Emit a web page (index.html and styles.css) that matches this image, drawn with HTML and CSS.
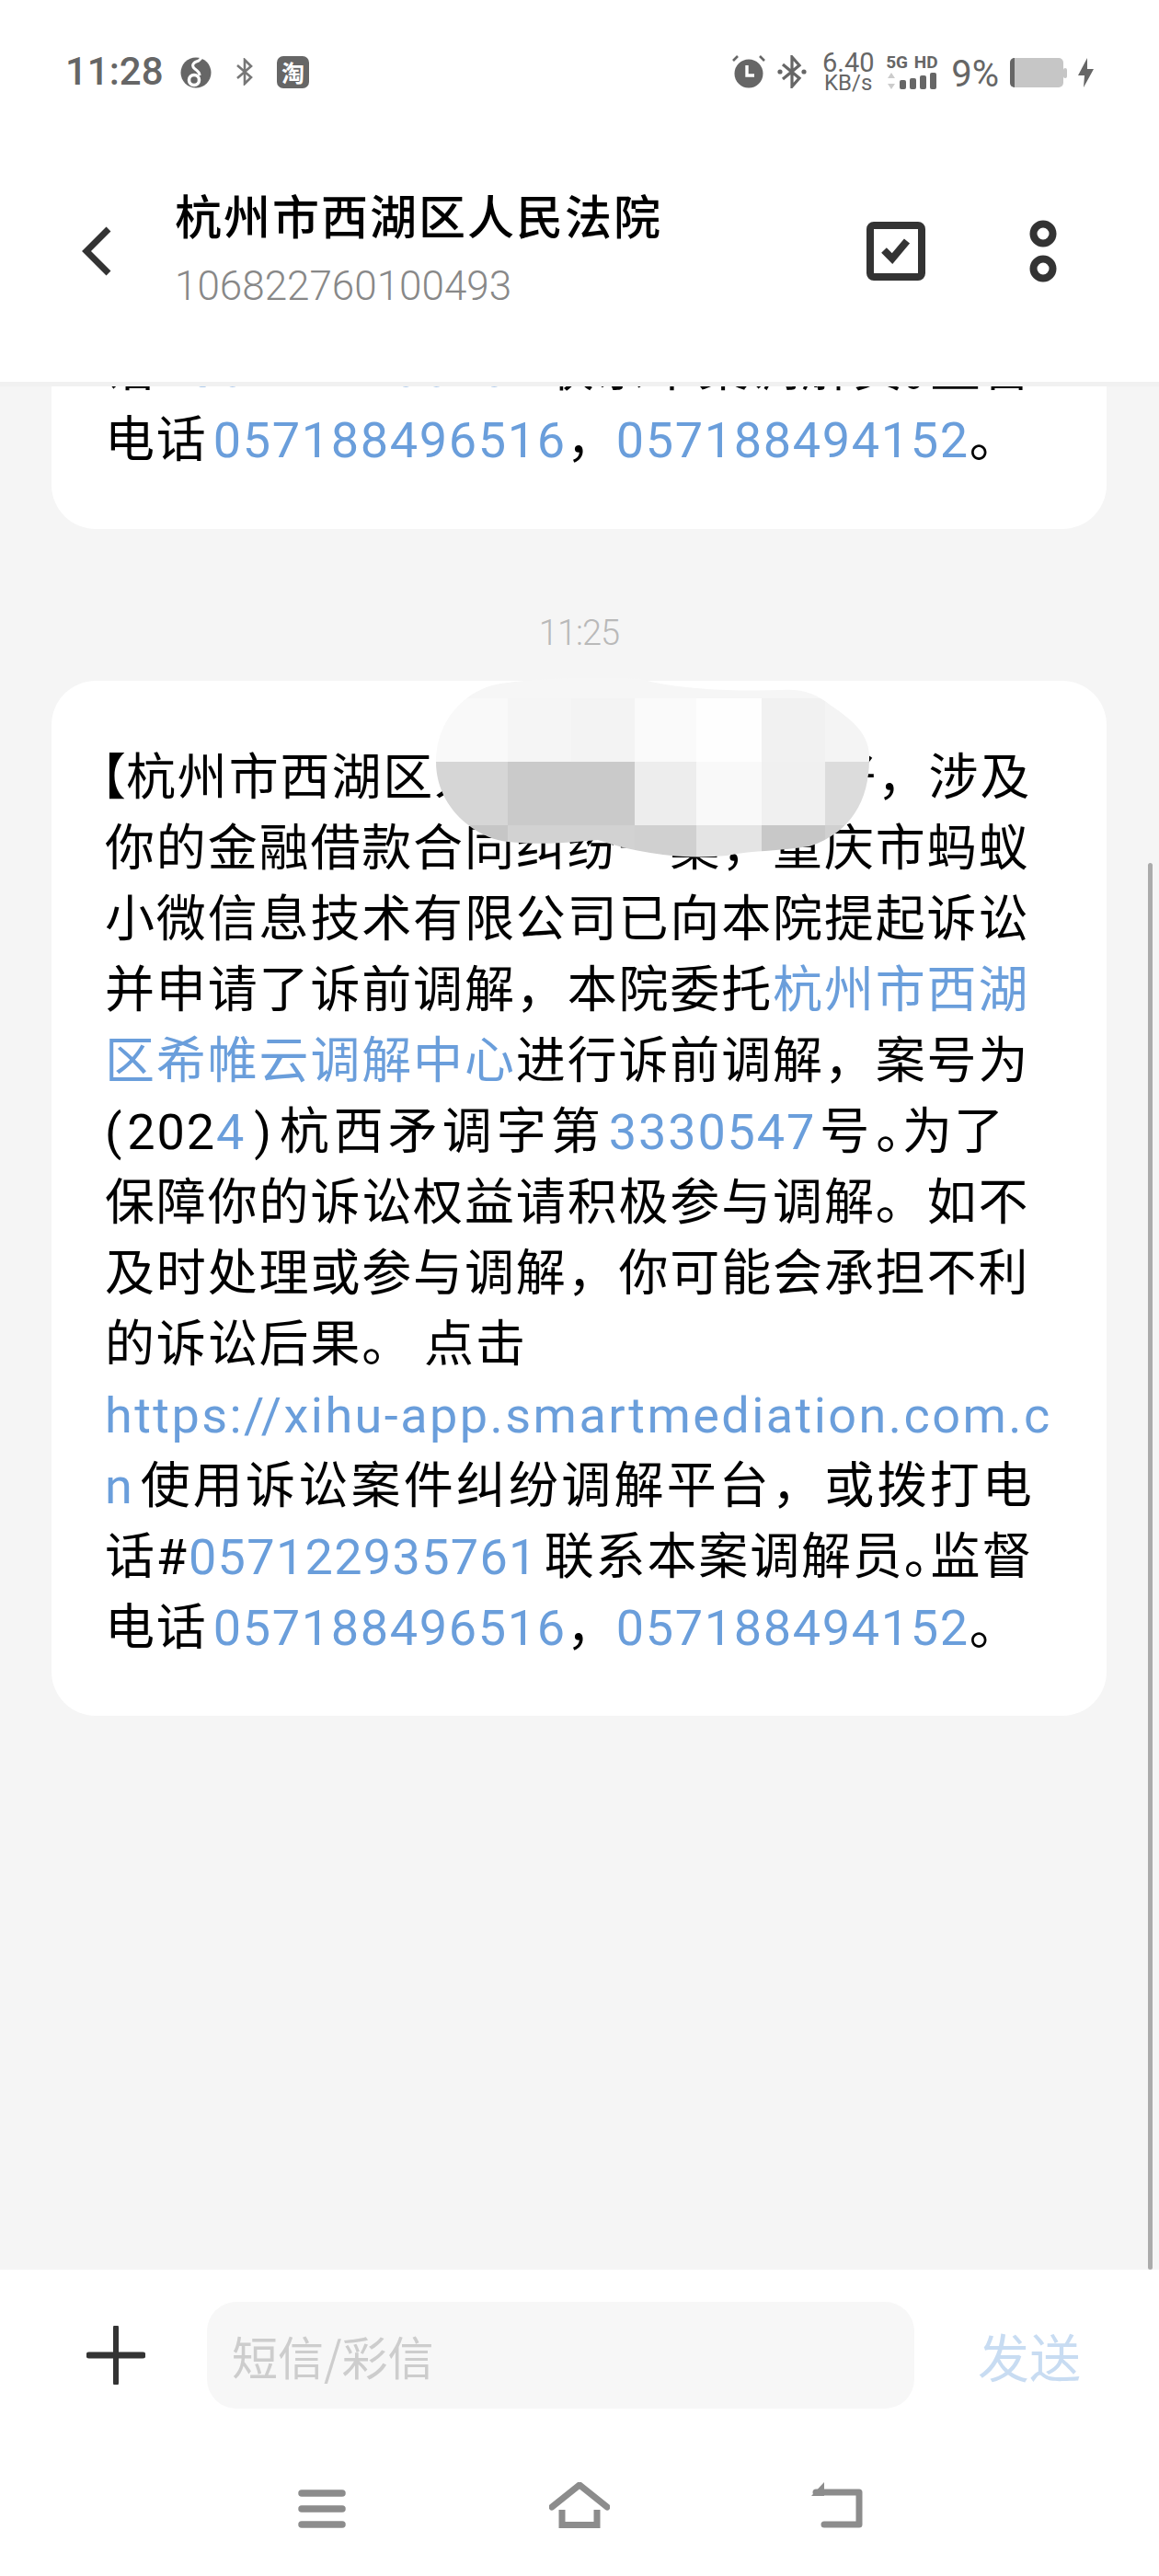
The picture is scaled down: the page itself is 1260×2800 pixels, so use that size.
FILE: index.html
```html
<!DOCTYPE html>
<html lang="zh-CN">
<head>
<meta charset="utf-8">
<title>短信</title>
<link rel="stylesheet" href="styles.css">
</head>
<body>
<div class="phone">
  <header class="top">
    <div class="status">
      <div class="status-left">
        <span class="clock">11:28</span>
        <svg class="ic-music" width="34" height="36" viewBox="0 0 34 36"><circle cx="17" cy="19" r="16.5" fill="#666"/><path d="M25 1 L20 6 C13 8 12 12 16 15 C19 17 21 19 21 22" fill="none" stroke="#fff" stroke-width="3"/><circle cx="15" cy="27" r="5.5" fill="none" stroke="#fff" stroke-width="3.5"/></svg>
        <svg class="ic-bt-small" width="20" height="30" viewBox="0 0 20 30"><path d="M2 8 L17 21 L10 28 V2 L17 9 L2 22" fill="none" stroke="#777" stroke-width="2.6"/></svg>
        <span class="tao">淘</span>
      </div>
      <div class="status-right">
        <svg class="ic-alarm" width="36" height="36" viewBox="0 0 36 36"><path d="M1 6 L6 1 M35 6 L30 1" stroke="#666" stroke-width="2.6"/><circle cx="18" cy="20" r="15.5" fill="#666"/><path d="M16 11 V22 H24" fill="none" stroke="#fff" stroke-width="3.4"/></svg>
        <svg class="ic-bt" width="32" height="36" viewBox="0 0 32 36"><path d="M6 10 L24 25 L16 34 V2 L24 11 L6 26" fill="none" stroke="#666" stroke-width="3.2"/><circle cx="3" cy="18" r="2.6" fill="#666"/><circle cx="29" cy="18" r="2.6" fill="#666"/></svg>
        <div class="speed"><span class="speed-num">6.40</span><span class="speed-unit">KB/s</span></div>
        <div class="net">
          <span class="net-label">5G HD</span>
          <svg width="58" height="20" viewBox="0 0 58 20"><path d="M6 1 L10 7 H2 Z M6 19 L10 13 H2 Z" fill="#ccc"/><rect x="15" y="9" width="7" height="10" rx="2" fill="#666"/><rect x="26" y="7" width="7" height="12" rx="2" fill="#666"/><rect x="37" y="4" width="7" height="15" rx="2" fill="#666"/><rect x="48" y="1" width="7" height="18" rx="2" fill="#666"/></svg>
        </div>
        <span class="pct">9%</span>
        <svg class="ic-batt" width="62" height="32" viewBox="0 0 62 32"><rect x="0" y="0" width="58" height="32" rx="5" fill="#c6c6c6"/><rect x="58" y="11" width="4" height="11" rx="2" fill="#c6c6c6"/><path d="M5 0 A5 5 0 0 0 0 5 V27 A5 5 0 0 0 5 32 Z" fill="#666"/></svg>
        <svg class="ic-bolt" width="17" height="32" viewBox="0 0 17 32"><path d="M10 0 L0 19 H7 L6 32 L17 12 H10 Z" fill="#666"/></svg>
      </div>
    </div>
    <div class="bar">
      <svg class="ic-back" width="32" height="54" viewBox="0 0 32 54"><path d="M29 3 L5 27 L29 51" fill="none" stroke="#333" stroke-width="7"/></svg>
      <div class="who">
        <div class="who-name">杭州市西湖区人民法院</div>
        <div class="who-num">106822760100493</div>
      </div>
      <svg class="ic-check" width="64" height="64" viewBox="0 0 64 64"><rect x="4" y="4" width="56" height="56" rx="4" fill="none" stroke="#333" stroke-width="8"/><path d="M19 31 L28 40 L44 21" fill="none" stroke="#333" stroke-width="8"/></svg>
      <svg class="ic-more" width="30" height="68" viewBox="0 0 30 68"><circle cx="15" cy="15" r="10.5" fill="none" stroke="#333" stroke-width="8"/><circle cx="15" cy="53" r="10.5" fill="none" stroke="#333" stroke-width="8"/></svg>
    </div>
  </header>

  <main class="thread">
    <div class="scrollbar"></div>
    <article class="card card-clipped">
      <span class="line">话#<a class="lk tight">057122935761</a><span class="gap"></span>联系本案调解员<span class="half">。</span>监督</span>
      <span class="line">电话<span class="gap-m"></span><a class="lk num">057188496516</a><span class="comma">，</span><a class="lk num">057188494152</a>。</span>
    </article>
    <div class="stamp">11:25</div>
    <article class="card card-main">
      <span class="line"><span class="half bracket">【</span>杭州市西湖区人民法院<span class="half">】</span><span class="gap-m"></span>某某你好，涉及</span>
      <span class="line">你的金融借款合同纠纷一案，重庆市蚂蚁</span>
      <span class="line">小微信息技术有限公司已向本院提起诉讼</span>
      <span class="line">并申请了诉前调解，本院委托<a class="lk">杭州市西湖</a></span>
      <span class="line"><a class="lk">区希帷云调解中心</a>进行诉前调解，案号为</span>
      <span class="line"><span class="paren-open">(</span>202<a class="lk paren-end">4</a>)<span class="gap"></span><span class="airy">杭西矛调字第</span><span class="gap-s"></span><a class="lk">3330547</a><span class="gap-s"></span><span class="hao">号</span><span class="half">。</span>为了</span>
      <span class="line">保障你的诉讼权益请积极参与调解。如不</span>
      <span class="line">及时处理或参与调解，你可能会承担不利</span>
      <span class="line">的诉讼后果。<span class="gap-l"></span>点击</span>
      <span class="line"><a class="lk url">https://xihu-app.smartmediation.com.c</a></span>
      <span class="line"><a class="lk">n</a><span class="gap"></span><span class="roomy">使用诉讼案件纠纷调解平台，或拨打电</span></span>
      <span class="line">话#<a class="lk tight">057122935761</a><span class="gap"></span>联系本案调解员<span class="half">。</span>监督</span>
      <span class="line">电话<span class="gap-m"></span><a class="lk num">057188496516</a><span class="comma">，</span><a class="lk num">057188494152</a>。</span>
      <svg class="mosaic" width="472" height="196" viewBox="474 737 472 196">
        <defs><clipPath id="blob"><path d="M474 828 C474 780 510 745 552 742 C590 737 660 735 696 738 C730 748 790 752 850 750 C875 748 890 756 905 768 C930 785 946 800 945 825 C945 870 925 905 880 920 C850 925 820 924 790 930 C750 934 700 930 650 913 C610 917 580 918 552 915 C520 912 474 880 474 828 Z"/></clipPath></defs>
        <g clip-path="url(#blob)">
          <rect x="474" y="737" width="472" height="22" fill="#f6f6f6"/>
          <rect x="474" y="759" width="78" height="69" fill="#f9f9f9"/>
          <rect x="552" y="759" width="69" height="69" fill="#f5f5f5"/>
          <rect x="621" y="759" width="69" height="69" fill="#f3f3f3"/>
          <rect x="690" y="759" width="67" height="69" fill="#fafafa"/>
          <rect x="757" y="759" width="71" height="69" fill="#fefefe"/>
          <rect x="828" y="759" width="69" height="69" fill="#f1f1f1"/>
          <rect x="897" y="759" width="49" height="69" fill="#f4f4f4"/>
          <rect x="474" y="828" width="78" height="69" fill="#d6d6d6"/>
          <rect x="552" y="828" width="138" height="69" fill="#cacaca"/>
          <rect x="690" y="828" width="67" height="69" fill="#ededed"/>
          <rect x="757" y="828" width="71" height="69" fill="#f9f9f9"/>
          <rect x="828" y="828" width="69" height="69" fill="#f0f0f0"/>
          <rect x="897" y="828" width="49" height="69" fill="#dcdcdc"/>
          <rect x="474" y="897" width="78" height="36" fill="#c6c6c6"/>
          <rect x="552" y="897" width="138" height="36" fill="#d2d2d2"/>
          <rect x="690" y="897" width="67" height="36" fill="#d0d0d0"/>
          <rect x="757" y="897" width="71" height="36" fill="#e4e4e4"/>
          <rect x="828" y="897" width="69" height="36" fill="#c8c8c8"/>
          <rect x="897" y="897" width="49" height="36" fill="#d0d0d0"/>
        </g>
      </svg>
    </article>
  </main>

  <footer class="foot">
    <div class="compose">
      <svg class="ic-plus" width="64" height="64" viewBox="0 0 64 64"><path d="M32 2 V62" stroke="#333" stroke-width="6" stroke-linecap="round"/><path d="M3 32 H61" stroke="#333" stroke-width="7" stroke-linecap="round"/></svg>
      <div class="field">短信/彩信</div>
      <div class="send">发送</div>
    </div>
    <nav class="nav">
      <div class="slot"><svg width="52" height="42" viewBox="0 0 52 42"><path d="M4 4 H48 M4 21 H48 M4 38 H48" stroke="#8c8c8c" stroke-width="7.5" stroke-linecap="round"/></svg></div>
      <div class="slot"><svg width="66" height="50" viewBox="0 0 66 50"><path d="M3 27 L33 3 L63 27" fill="none" stroke="#8c8c8c" stroke-width="7" stroke-linecap="round"/><path d="M14 30 V46.5 H52 V30" fill="none" stroke="#8c8c8c" stroke-width="7"/></svg></div>
      <div class="slot"><svg width="56" height="50" viewBox="0 0 56 50"><path d="M5 11 H52 V46 H14" fill="none" stroke="#8c8c8c" stroke-width="7" stroke-linecap="round" stroke-linejoin="round"/><path d="M0 15 L14 0 V15 Z" fill="#8c8c8c"/></svg></div>
    </nav>
  </footer>
</div>
</body>
</html>
```

FILE: styles.css
```css
* { box-sizing: border-box; }
html, body { margin: 0; padding: 0; background: #fff; }
body { font-family: "Noto Sans CJK SC", "Noto Sans", sans-serif; }

.phone { width: 1260px; height: 2800px; display: flex; flex-direction: column; overflow: hidden; }

/* top */
.top { height: 415px; flex: none; background: #fff; }
.status { height: 44px; margin-top: 56px; display: flex; justify-content: space-between; align-items: center; padding: 0 71px 0 71px; color: #666; }
.status-left, .status-right { display: flex; align-items: center; }
.clock { font: 500 42px/44px Roboto, sans-serif; color: #666; width: 108px; }
.ic-music { margin-left: 17px; }
.ic-bt-small { margin-left: 26px; }
.tao { margin-left: 25px; width: 35px; height: 35px; border-radius: 7px; background: #666; color: #fff; font-size: 25px; line-height: 35px; text-align: center; font-weight: 700; }
.ic-bt { margin-left: 13px; }
.speed { margin-left: 17px; display: flex; flex-direction: column; align-items: center; width: 56px; color: #666; font-family: Roboto, sans-serif; margin-top: 0; }
.speed-num { font-size: 29px; line-height: 24px; }
.speed-unit { font-size: 24px; line-height: 20px; }
.net { margin-left: 13px; display: flex; flex-direction: column; width: 60px; }
.net-label { font: 700 19px/20px Roboto, sans-serif; color: #666; white-space: nowrap; word-spacing: 2px; }
.pct { margin-left: 11px; font: 400 40px/44px Roboto, sans-serif; color: #666; margin-top: 6px; }
.ic-batt { margin-left: 12px; margin-top: 2px; }
.ic-bolt { margin-left: 12px; margin-top: 2px; }

.bar { display: flex; align-items: center; height: 130px; margin-top: 108px; padding-left: 89px; }
.who { margin-left: 69px; width: 748px; margin-top: -4px; }
.who-name { font-size: 51px; line-height: 60px; font-weight: 500; color: #000; letter-spacing: 2px; white-space: nowrap; }
.who-num { font: 300 44px/56px Roboto, sans-serif; color: #888; margin-top: 20px; }
.ic-check { margin-left: 4px; }
.ic-more { margin-left: 113px; }

/* thread */
.thread { flex: 1; min-height: 0; position: relative; overflow: hidden; background: #f5f5f5; border-top: 5px solid #f1f1f1; padding: 0 57px 0 56px; }
.scrollbar { position: absolute; right: 7px; top: 518px; height: 1529px; width: 5px; border-radius: 3px; background: #ababab; }
.card { position: relative; background: #fff; border-radius: 48px; padding: 0 40px 57px 58px; font-size: 54px; line-height: 77px; letter-spacing: 1.85px; color: #000; }
.card-clipped { margin-top: -57px; padding-top: 0; padding-bottom: 58px; }
.card-main { padding-top: 67px; }
.line { display: block; white-space: nowrap; font-family: Roboto, "Noto Sans CJK SC", sans-serif; }
.lk { color: #6a9edb; }
.num { letter-spacing: 1.65px; }
.tight { letter-spacing: 1.3px; }
.url { letter-spacing: 2.45px; }
.gap { display: inline-block; width: 7px; }
.gap-m { display: inline-block; width: 6px; }
.gap-s { display: inline-block; width: 4px; }
.gap-l { display: inline-block; width: 12px; }
.half { font-feature-settings: "halt"; }
.bracket { margin-left: -4px; letter-spacing: 0; }
.comma { letter-spacing: 0; }
.hao { letter-spacing: 7px; }
.paren-open { margin-right: 4px; }
.paren-end { margin-right: 9px; }
.airy { letter-spacing: 5px; }
.roomy { letter-spacing: 3.2px; }
.stamp { margin-top: 83px; margin-bottom: 22px; height: 60px; text-align: center; font: 300 38px/60px Roboto, sans-serif; color: #b9b9b9; letter-spacing: -1px; }
.mosaic { position: absolute; left: 418px; top: -3px; }

/* footer */
.foot { flex: none; height: 333px; background: #fff; }
.compose { display: flex; align-items: center; height: 116px; margin-top: 35px; padding-left: 94px; }
.field { margin-left: 67px; width: 769px; height: 116px; border-radius: 32px; background: #f7f7f7; color: #cdcdcd; font-size: 50px; line-height: 116px; padding-left: 27px; }
.send { margin-left: 69px; font-size: 56px; line-height: 116px; color: #c8dcf2; white-space: nowrap; }
.nav { display: flex; justify-content: center; margin-top: 80px; }
.slot { width: 280px; height: 50px; display: flex; justify-content: center; align-items: flex-end; }
```
